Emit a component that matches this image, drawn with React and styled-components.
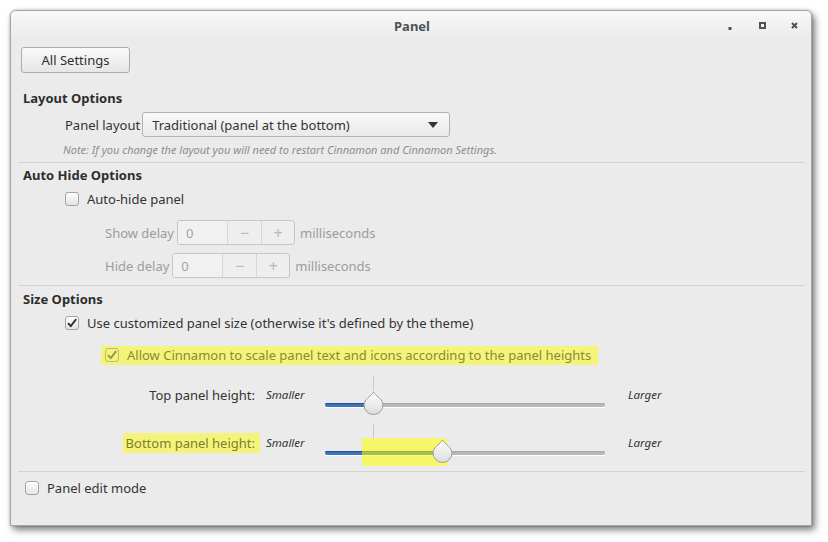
import React from 'react';
import styled, { createGlobalStyle } from 'styled-components';

const GlobalStyle = createGlobalStyle`
  html, body {
    margin: 0;
    padding: 0;
    background: #ffffff;
  }
  body {
    font-family: "Noto Sans", "Open Sans", sans-serif;
    font-size: 13px;
    color: #333333;
  }
`;

const Page = styled.div`
  padding: 10px 0 0 10px;
  width: 828px;
  height: 542px;
  box-sizing: border-box;
`;

const Window = styled.div`
  width: 802px;
  height: 516px;
  box-sizing: border-box;
  border: 1px solid #a4a4a4;
  border-radius: 6px 6px 0 0;
  background: #ebebeb;
  box-shadow: 0 0 3px rgba(0, 0, 0, 0.25), 3px 4px 7px rgba(0, 0, 0, 0.5);
  display: flex;
  flex-direction: column;
  overflow: hidden;
`;

const TitleBar = styled.div`
  height: 29px;
  display: grid;
  grid-template-columns: 1fr auto 1fr;
  align-items: center;
  background: linear-gradient(#f8f8f8, #ebebeb);
`;

const Title = styled.div`
  grid-column: 2;
  font-weight: bold;
  font-size: 13px;
  color: #4b5257;
  padding-left: 2px;
`;

const Controls = styled.div`
  grid-column: 3;
  justify-self: end;
  display: flex;
  align-items: center;
  padding-right: 1px;
`;

const ControlButton = styled.div`
  width: 32px;
  height: 16px;
  display: flex;
  align-items: center;
  justify-content: center;
  color: #4b5459;
`;

const Content = styled.div`
  display: flex;
  flex-direction: column;
`;

const TopBar = styled.div`
  padding: 7px 0 0 10px;
`;

const PushButton = styled.div`
  width: 109px;
  height: 26px;
  box-sizing: border-box;
  border: 1px solid #adadad;
  border-radius: 3px;
  background: linear-gradient(#fafafa, #e6e6e6);
  display: flex;
  align-items: center;
  justify-content: center;
  color: #2f2f2f;
`;

const Section = styled.div`
  margin: 0 6px 0 7px;
  display: flex;
  flex-direction: column;
`;

const Header = styled.div`
  margin-top: ${(p) => p.$top}px;
  height: 20px;
  line-height: 20px;
  padding-left: 5px;
  font-weight: bold;
  color: #2e2e2e;
`;

const Row = styled.div`
  margin-top: ${(p) => p.$top}px;
  height: ${(p) => p.$h || 20}px;
  padding-left: ${(p) => p.$indent}px;
  display: flex;
  align-items: center;
  gap: ${(p) => p.$gap ?? 8}px;
  color: ${(p) => (p.$dim ? '#9c9c9c' : '#333333')};
`;

const Note = styled.div`
  margin-top: 6px;
  height: 14px;
  line-height: 14px;
  padding-left: 45px;
  font-size: 11px;
  font-style: italic;
  color: #8d8d8d;
`;

const Divider = styled.div`
  margin-top: ${(p) => p.$top}px;
  height: 1px;
  background: #d3d3d3;
`;

const Combo = styled.div`
  width: 308px;
  height: 25px;
  box-sizing: border-box;
  border: 1px solid #b3b3b3;
  border-radius: 3px;
  background: linear-gradient(#f9f9f9, #e9e9e9);
  display: flex;
  align-items: center;
  justify-content: space-between;
  padding: 0 11px 0 9px;
`;

const Arrow = styled.span`
  width: 0;
  height: 0;
  border-left: 5px solid transparent;
  border-right: 5px solid transparent;
  border-top: 6px solid #333333;
`;

const Spin = styled.div`
  height: 25px;
  box-sizing: border-box;
  border: 1px solid #c6c6c6;
  border-radius: 3px;
  display: flex;
  overflow: hidden;
  background: #eeeeee;
`;

const SpinEntry = styled.div`
  width: 49px;
  padding-left: 8px;
  box-sizing: border-box;
  display: flex;
  align-items: center;
  background: #f1f1f1;
  color: #a3a3a3;
`;

const SpinButton = styled.div`
  width: ${(p) => p.$w}px;
  border-left: 1px solid #d6d6d6;
  display: flex;
  align-items: center;
  justify-content: center;
  color: #b8b8b8;
  font-size: 16px;
`;

const Unit = styled.span`
  margin-left: 2px;
`;

const Box = styled.span`
  width: 14px;
  height: 14px;
  box-sizing: border-box;
  border: 1px solid ${(p) => (p.$dim ? '#b9b97a' : '#a3a3a3')};
  border-radius: 3px;
  background: ${(p) => (p.$dim ? 'transparent' : 'linear-gradient(#ffffff, #e4e4e4)')};
  display: flex;
  align-items: center;
  justify-content: center;
  flex-shrink: 0;
`;

const Highlight = styled.span`
  display: inline-flex;
  align-items: center;
  gap: 8px;
  height: 19px;
  padding: 0 7px 0 4px;
  margin-left: -4px;
  background: #f4f47a;
  color: ${(p) => p.$color || '#8a8a35'};
`;

const SliderRow = styled.div`
  height: 48px;
  display: grid;
  grid-template-columns: 237px 70px 280px auto;
  align-items: start;
`;

const SliderLabel = styled.div`
  margin-top: 16px;
  line-height: 18px;
  text-align: right;
  color: #333333;
`;

const Hint = styled.div`
  margin-top: 16px;
  line-height: 18px;
  padding-left: ${(p) => p.$pad}px;
  font-size: 11.5px;
  font-style: italic;
  color: #333333;
`;

const LabelMark = styled.span`
  background: #f4f47a;
  color: #7e7e2e;
  padding: 1px 5px 1px 3px;
  margin-right: -5px;
`;

const Slider = styled.div`
  position: relative;
  height: 48px;
`;

const Mark = styled.span`
  position: absolute;
  top: 6px;
  width: 1px;
  height: 15px;
  background: #c9c9c9;
`;

const Trough = styled.div`
  position: absolute;
  left: 0;
  right: 0;
  top: 33px;
  height: 4px;
  border-radius: 2px;
  background: #b9b9b9;
  box-shadow: inset 0 1px 0 #a7a7a7, 0 1px 0 #ffffff;
  overflow: hidden;
`;

const Fill = styled.div`
  height: 100%;
  background: #3b74b8;
  box-shadow: inset 0 1px 0 #23528c;
`;

const Knob = styled.svg`
  position: absolute;
  top: 21px;
  margin-left: -10px;
`;

const Marker = styled.div`
  position: absolute;
  left: 37px;
  top: 20px;
  width: 86px;
  height: 28px;
  border-radius: 2px 6px 4px 3px;
  background: rgba(255, 255, 0, 0.55);
`;

function Check({ checked, dim }) {
  return (
    <Box $dim={dim}>
      {checked && (
        <svg width="12" height="12" viewBox="0 0 12 12">
          <path d="M2 6.2 L4.8 9 L10.2 2.2" fill="none" stroke={dim ? '#9a9a40' : '#333'} strokeWidth="2" />
        </svg>
      )}
    </Box>
  );
}

function SpinBox({ value }) {
  return (
    <Spin>
      <SpinEntry>{value}</SpinEntry>
      <SpinButton $w={33}>−</SpinButton>
      <SpinButton $w={32}>+</SpinButton>
    </Spin>
  );
}

function HeightSlider({ value, mark, marked }) {
  return (
    <Slider>
      <Mark style={{ left: `${mark}%` }} />
      <Trough>
        <Fill style={{ width: `${value}%` }} />
      </Trough>
      {marked && <Marker />}
      <Knob width="21" height="24" viewBox="0 0 21 24" style={{ left: `${value}%` }}>
        <defs>
          <linearGradient id="knobFill" x1="0" y1="0" x2="0" y2="1">
            <stop offset="0" stopColor="#ffffff" />
            <stop offset="1" stopColor="#dcdcdc" />
          </linearGradient>
        </defs>
        <path
          d="M10.5 1 C12.5 5 20 8 20 14 A9.5 9.5 0 0 1 1 14 C1 8 8.5 5 10.5 1 Z"
          fill="url(#knobFill)"
          stroke="#9c9c9c"
          strokeWidth="1"
        />
      </Knob>
    </Slider>
  );
}

export default function App() {
  return (
    <Page>
      <GlobalStyle />
      <Window>
        <TitleBar>
          <Title>Panel</Title>
          <Controls>
            <ControlButton>
              <svg width="6" height="8" viewBox="0 0 6 8">
                <rect x="1.5" y="5" width="3" height="3" fill="currentColor" />
              </svg>
            </ControlButton>
            <ControlButton>
              <svg width="7" height="7" viewBox="0 0 7 7">
                <rect x="1" y="1" width="5" height="5" fill="none" stroke="currentColor" strokeWidth="2" />
              </svg>
            </ControlButton>
            <ControlButton>
              <svg width="7" height="7" viewBox="0 0 7 7">
                <path d="M1 1 L6 6 M6 1 L1 6" stroke="currentColor" strokeWidth="2" />
              </svg>
            </ControlButton>
          </Controls>
        </TitleBar>

        <Content>
          <TopBar>
            <PushButton>All Settings</PushButton>
          </TopBar>

          <Section>
            <Header $top={15}>Layout Options</Header>
            <Row $top={4} $h={25} $indent={47} $gap={2}>
              Panel layout
              <Combo>
                Traditional (panel at the bottom)
                <Arrow />
              </Combo>
            </Row>
            <Note>Note: If you change the layout you will need to restart Cinnamon and Cinnamon Settings.</Note>
            <Divider $top={5} />

            <Header $top={2}>Auto Hide Options</Header>
            <Row $top={4} $indent={47}>
              <Check />
              Auto-hide panel
            </Row>
            <Row $top={11} $h={25} $indent={87} $gap={3} $dim>
              Show delay
              <SpinBox value="0" />
              <Unit>milliseconds</Unit>
            </Row>
            <Row $top={8} $h={25} $indent={87} $gap={3} $dim>
              Hide delay
              <SpinBox value="0" />
              <Unit>milliseconds</Unit>
            </Row>
            <Divider $top={7} />

            <Header $top={3}>Size Options</Header>
            <Row $top={4} $indent={47}>
              <Check checked />
              Use customized panel size (otherwise it's defined by the theme)
            </Row>
            <Row $top={12} $indent={87}>
              <Highlight>
                <Check checked dim />
                Allow Cinnamon to scale panel text and icons according to the panel heights
              </Highlight>
            </Row>
            <SliderRow style={{ marginTop: 5 }}>
              <SliderLabel>Top panel height:</SliderLabel>
              <Hint $pad={11}>Smaller</Hint>
              <HeightSlider value={17.1} mark={17.1} />
              <Hint $pad={23}>Larger</Hint>
            </SliderRow>
            <SliderRow>
              <SliderLabel>
                <LabelMark>Bottom panel height:</LabelMark>
              </SliderLabel>
              <Hint $pad={11}>Smaller</Hint>
              <HeightSlider value={41.8} mark={17.1} marked />
              <Hint $pad={23}>Larger</Hint>
            </SliderRow>
            <Divider $top={5} />

            <Row $top={6} $indent={7}>
              <Check />
              Panel edit mode
            </Row>
          </Section>
        </Content>
      </Window>
    </Page>
  );
}
